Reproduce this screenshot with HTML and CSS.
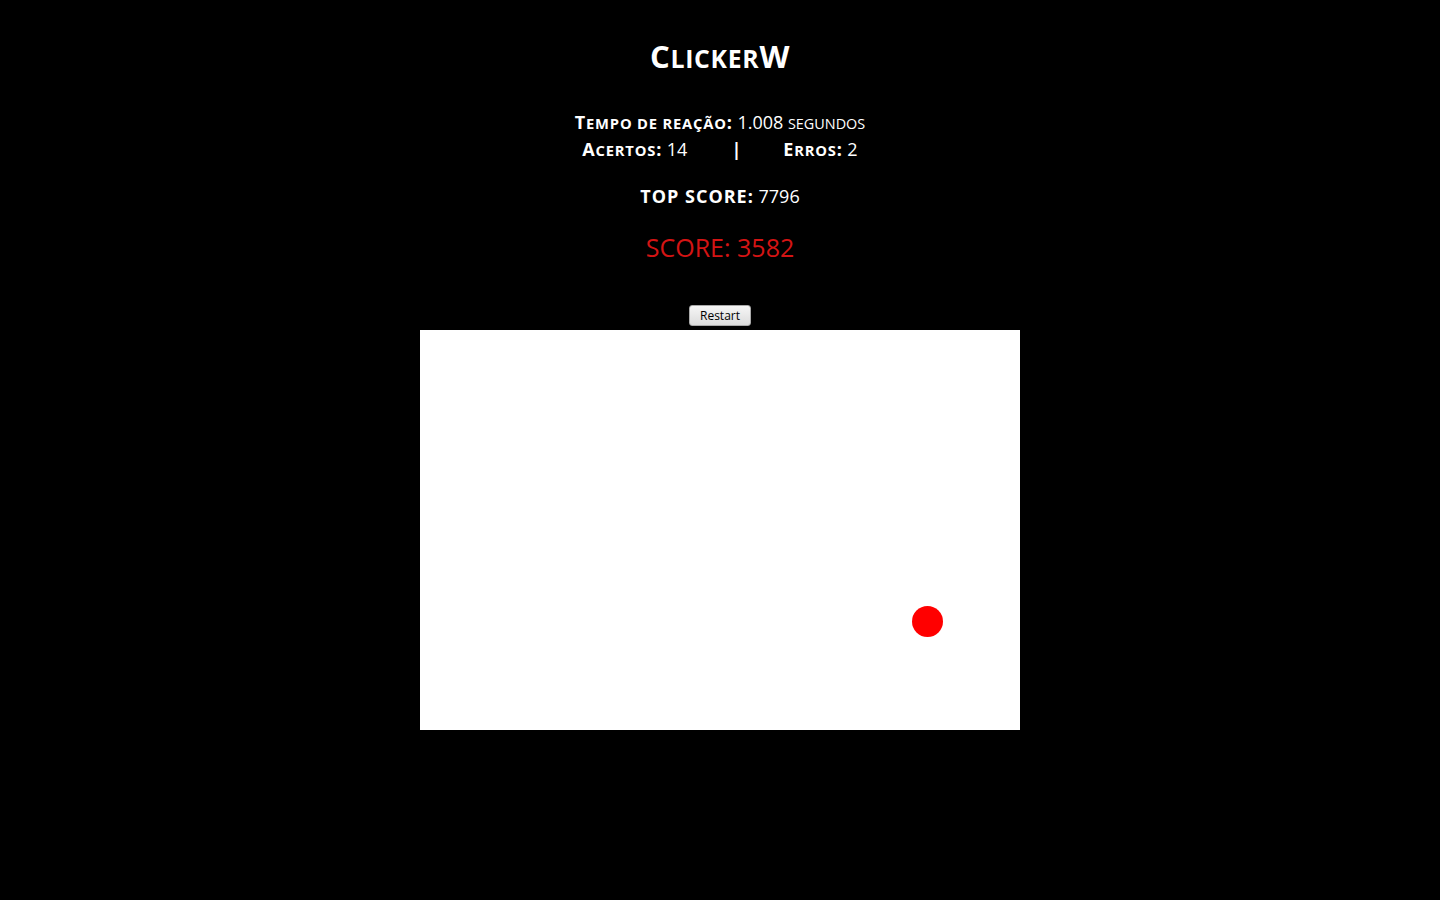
FILE: index.html
```html
<!DOCTYPE html>
<html lang="pt">
<head>
<meta charset="utf-8">
<title>ClickerW</title>
<link rel="stylesheet" href="styles.css">
</head>
<body>
<main class="page">
  <h1 class="title">C<span class="sc">licker</span>W</h1>
  <div class="stats">
    <div class="stat-line"><b>T<span class="sc">empo de reação</span>:</b> 1.008 <span class="sc light">segundos</span></div>
    <div class="stat-line hits">
      <span class="cell"><b>A<span class="sc">certos</span>:</b> 14</span>
      <span class="sep">|</span>
      <span class="cell"><b>E<span class="sc">rros</span>:</b> 2</span>
    </div>
  </div>
  <div class="top"><b>TOP SCORE:</b> 7796</div>
  <div class="score">SCORE: 3582</div>
  <button class="restart" type="button">Restart</button>
  <div class="board">
    <span class="dot"></span>
  </div>
</main>
</body>
</html>
```

FILE: styles.css
```css
html, body {
  margin: 0;
  padding: 0;
  background: #000;
}
body {
  font-family: "Open Sans", "Liberation Sans", sans-serif;
  color: #fff;
}
.page {
  display: flex;
  flex-direction: column;
  align-items: center;
  padding-top: 36px;
}
.sc {
  text-transform: uppercase;
  font-size: 0.8em;
  line-height: 1;
}
.title {
  margin: 0;
  font-size: 31px;
  font-weight: 700;
  line-height: 40px;
  letter-spacing: 0.7px;
}
.stats {
  margin-top: 33px;
  font-size: 18px;
  line-height: 27px;
  text-align: center;
}
.stats b {
  font-weight: 700;
  letter-spacing: 0.8px;
}
.stats b .sc {
  font-size: 0.82em;
}
.hits {
  display: flex;
  justify-content: center;
}
.sep {
  display: inline-block;
  margin: 0 42px 0 44px;
  font-weight: 700;
}
.top {
  margin-top: 20px;
  font-size: 18px;
  line-height: 27px;
}
.top b {
  font-weight: 700;
  letter-spacing: 1px;
}
.score {
  margin-top: 21px;
  font-size: 25px;
  line-height: 32px;
  color: #d41414;
}
.restart {
  margin-top: 42px;
  font-family: "Open Sans", "Liberation Sans", sans-serif;
  font-size: 12px;
  height: 21px;
  padding: 0 10px;
  color: #000;
  background: linear-gradient(#f6f6f6, #dcdcdc);
  border: 1px solid #a9a9a9;
  border-radius: 3px;
  line-height: 19px;
}
.board {
  position: relative;
  width: 600px;
  height: 400px;
  margin-top: 4px;
  background: #fff;
}
.dot {
  position: absolute;
  left: 492px;
  top: 276px;
  width: 31px;
  height: 31px;
  border-radius: 50%;
  background: #f00;
}
```
